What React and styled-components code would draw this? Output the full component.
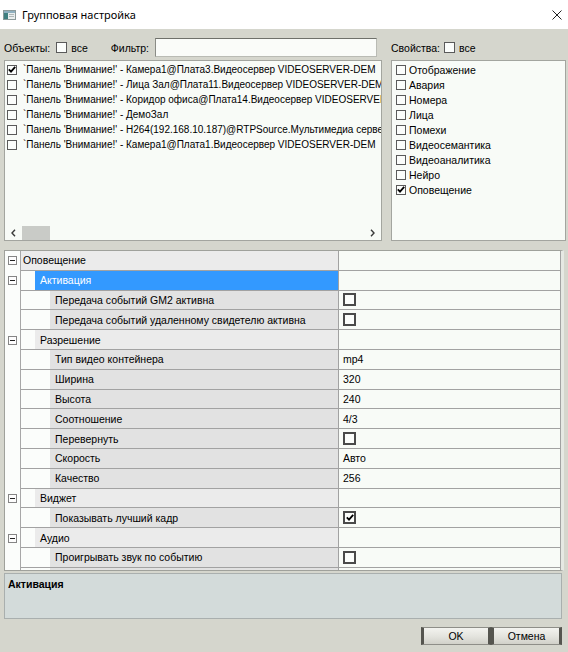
import React from 'react';
import styled, { createGlobalStyle } from 'styled-components';

const GlobalStyle = createGlobalStyle`
  html, body { margin: 0; padding: 0; background: #d5d6cd; }
  body { font-family: "Liberation Sans", Arial, sans-serif; font-size: 10.5px; color: #000; }
  * { box-sizing: border-box; }
`;

const Window = styled.div`
  width: 568px;
  height: 652px;
  display: flex;
  flex-direction: column;
  background: #d5d6cd;
  overflow: hidden;
`;

const TitleBar = styled.div`
  height: 29px;
  flex: none;
  background: #ffffff;
  display: flex;
  align-items: center;
  padding: 0 6px 0 3px;
`;

const Title = styled.span`
  flex: 1;
  margin-left: 6px;
  font-family: "Noto Sans", "Liberation Sans", sans-serif;
  font-size: 11px;
  color: #000;
`;

const CloseIcon = styled.svg`
  width: 10px;
  height: 10px;
  display: block;
`;

const Body = styled.div`
  flex: 1;
  display: flex;
  flex-direction: column;
  padding: 0 2px 0 4px;
`;

const TopArea = styled.div`
  display: grid;
  grid-template-columns: 378px 1fr;
  column-gap: 9px;
`;

const Column = styled.div`
  display: flex;
  flex-direction: column;
`;

const FilterRow = styled.div`
  height: 31px;
  padding-top: 6px;
  display: flex;
  align-items: center;
  white-space: nowrap;
`;

const Label = styled.span`
  margin-left: ${p => p.$gap || 0}px;
`;

const Spacer = styled.div`
  flex: 1;
`;

const FilterInput = styled.div`
  width: 222px;
  height: 19px;
  margin-left: 6px;
  margin-right: 5px;
  background: #fafcf9;
  border: 1px solid #b9bbb4;
  border-top-color: #6f716b;
  border-left-color: #8a8c86;
`;

const Box = styled.span`
  flex: none;
  width: ${p => p.$size || 10}px;
  height: ${p => p.$size || 10}px;
  margin-left: ${p => p.$ml || 0}px;
  border: ${p => p.$thick ? 2 : 1}px solid ${p => p.$thick ? '#4a4a4a' : '#5a5a5a'};
  background: #fbfdfb;
  display: flex;
  align-items: center;
  justify-content: center;
`;

const CheckMark = () => (
  <svg width="8" height="7" viewBox="0 0 8 7">
    <path d="M0.8 3.4 L3 5.6 L7.2 0.8" fill="none" stroke="#000" strokeWidth="1.8" />
  </svg>
);

const CheckBox = ({ checked, size, ml, thick }) => (
  <Box $size={size} $ml={ml} $thick={thick}>{checked && <CheckMark />}</Box>
);

const ListBox = styled.div`
  height: 181px;
  border: 1px solid #a3a59f;
  background: #f8fbf7;
  display: flex;
  flex-direction: column;
  overflow: hidden;
  font-size: ${p => p.$fs || 10.5}px;
`;

const ListItems = styled.div`
  flex: 1;
  padding-top: 1px;
  display: flex;
  flex-direction: column;
  overflow: hidden;
`;

const ListItem = styled.div`
  height: 15px;
  flex: none;
  display: flex;
  align-items: center;
  padding-left: ${p => p.$pad}px;
  white-space: nowrap;
`;

const ItemText = styled.span`
  margin-left: ${p => p.$gap}px;
`;

const HScroll = styled.div`
  height: 15px;
  flex: none;
  display: flex;
  align-items: center;
`;

const ScrollArrow = styled.div`
  width: 17px;
  height: 15px;
  display: flex;
  align-items: center;
  justify-content: center;
`;

const ScrollThumb = styled.div`
  width: 28px;
  height: 14px;
  background: #c9cbc7;
`;

const Chevron = ({ dir }) => (
  <svg width="5" height="8" viewBox="0 0 5 8">
    <path d={dir === 'left' ? 'M4 0.8 L1 4 L4 7.2' : 'M1 0.8 L4 4 L1 7.2'} fill="none" stroke="#3a3a3a" strokeWidth="1.4" />
  </svg>
);

const Grid = styled.div`
  margin-top: 9px;
  margin-right: 2px;
  height: 321px;
  border: 1px solid #9fa19b;
  border-right: 3px solid #e6e8e3;
  background: #f8fbf7;
  display: flex;
  flex-direction: column;
  overflow: hidden;
`;

const Row = styled.div`
  flex: none;
  height: 19.8px;
  display: grid;
  grid-template-columns: 16px 317px 1fr;
`;

const Gutter = styled.div`
  background: #fbfdfb;
  border-right: 1px solid #a7a7a7;
  display: flex;
  align-items: center;
  justify-content: center;
  padding-right: 1px;
`;

const Minus = styled.span`
  width: 9px;
  height: 9px;
  border: 1px solid #858585;
  background: #fdfdfd;
  display: flex;
  align-items: center;
  justify-content: center;
  &::after {
    content: '';
    width: 5px;
    height: 1px;
    background: #222;
  }
`;

const LabelCell = styled.div`
  display: flex;
  padding-left: ${p => p.$indent}px;
  background: #fbfdfb;
  border-bottom: 1px solid #a2a2a2;
`;

const LabelText = styled.div`
  flex: 1;
  display: flex;
  align-items: center;
  padding-left: ${p => p.$pad}px;
  white-space: nowrap;
  overflow: hidden;
  background: ${p => p.$selected ? '#3399ff' : p.$category ? '#ebebeb' : '#e2e2e2'};
  color: ${p => p.$selected ? '#ffffff' : '#000000'};
`;

const ValueCell = styled.div`
  display: flex;
  align-items: center;
  padding-left: 4px;
  border-left: 1px solid #a2a2a2;
  border-bottom: 1px solid #a2a2a2;
  border-right: 1px solid #a2a2a2;
  background: #f8fbf7;
`;

const Description = styled.div`
  margin-top: 2px;
  margin-right: 4px;
  height: 46px;
  border: 1px solid #a9afae;
  background: #d3dbda;
  padding: 4px 3px;
  font-weight: bold;
  line-height: 13px;
`;

const ButtonRow = styled.div`
  margin-top: 8px;
  margin-right: 4px;
  display: flex;
  justify-content: flex-end;
`;

const Button = styled.div`
  width: ${p => p.$w}px;
  height: 18px;
  display: flex;
  align-items: center;
  justify-content: center;
  border: 1px solid #8e8e88;
  border-left: 3px solid #55554f;
  border-right: 3px solid #55554f;
  background: linear-gradient(#f3f3ef, #e3e3dd 55%, #d1d1c9);
  color: #000;
`;

const AppIcon = () => (
  <svg width="13" height="10" viewBox="0 0 13 10">
    <rect x="0.5" y="0.5" width="12" height="9" fill="#e9eeee" stroke="#8c9a9a" />
    <rect x="1" y="1" width="11" height="2" fill="#8fb0c0" />
    <rect x="1" y="3" width="4" height="6" fill="#3f7f80" />
    <rect x="6" y="4" width="5" height="1" fill="#b0b8b8" />
    <rect x="6" y="6" width="5" height="1" fill="#b0b8b8" />
  </svg>
);

const objects = [
  { text: "`Панель 'Внимание!' - Камера1@Плата3.Видеосервер VIDEOSERVER-DEM", checked: true },
  { text: "`Панель 'Внимание!' - Лица Зал@Плата11.Видеосервер VIDEOSERVER-DEM" },
  { text: "`Панель 'Внимание!' - Коридор офиса@Плата14.Видеосервер VIDEOSERVER-DEM" },
  { text: "`Панель 'Внимание!' - ДемоЗал" },
  { text: "`Панель 'Внимание!' - H264(192.168.10.187)@RTPSource.Мультимедиа сервер VIDEOSERVER-DEM" },
  { text: "`Панель 'Внимание!' - Камера1@Плата1.Видеосервер VIDEOSERVER-DEM" },
];

const props = [
  'Отображение', 'Авария', 'Номера', 'Лица', 'Помехи',
  'Видеосемантика', 'Видеоаналитика', 'Нейро', 'Оповещение',
];

const rows = [
  { kind: 'cat0', label: 'Оповещение' },
  { kind: 'cat1', label: 'Активация', selected: true },
  { kind: 'item', label: 'Передача событий GM2 активна', check: false },
  { kind: 'item', label: 'Передача событий удаленному свидетелю активна', check: false },
  { kind: 'cat1', label: 'Разрешение' },
  { kind: 'item', label: 'Тип видео контейнера', value: 'mp4' },
  { kind: 'item', label: 'Ширина', value: '320' },
  { kind: 'item', label: 'Высота', value: '240' },
  { kind: 'item', label: 'Соотношение', value: '4/3' },
  { kind: 'item', label: 'Перевернуть', check: false },
  { kind: 'item', label: 'Скорость', value: 'Авто' },
  { kind: 'item', label: 'Качество', value: '256' },
  { kind: 'cat1', label: 'Виджет' },
  { kind: 'item', label: 'Показывать лучший кадр', check: true },
  { kind: 'cat1', label: 'Аудио' },
  { kind: 'item', label: 'Проигрывать звук по событию', check: false },
  { kind: 'empty', label: '' },
];

const indentFor = { cat0: 0, cat1: 14, item: 29, empty: 29 };
const padFor = { cat0: 2, cat1: 5, item: 5, empty: 5 };

export default function App() {
  return (
    <>
      <GlobalStyle />
      <Window>
        <TitleBar>
          <AppIcon />
          <Title>Групповая настройка</Title>
          <CloseIcon viewBox="0 0 10 10">
            <path d="M0.5 0.5 L9.5 9.5 M9.5 0.5 L0.5 9.5" stroke="#222" strokeWidth="1" />
          </CloseIcon>
        </TitleBar>
        <Body>
          <TopArea>
            <Column>
              <FilterRow>
                <Label>Объекты:</Label>
                <CheckBox ml={6} size={11} />
                <Label $gap={4}>все</Label>
                <Spacer />
                <Label>Фильтр:</Label>
                <FilterInput />
              </FilterRow>
              <ListBox $fs={10}>
                <ListItems>
                  {objects.map((o, i) => (
                    <ListItem key={i} $pad={2}>
                      <CheckBox checked={o.checked} />
                      <ItemText $gap={6}>{o.text}</ItemText>
                    </ListItem>
                  ))}
                </ListItems>
                <HScroll>
                  <ScrollArrow><Chevron dir="left" /></ScrollArrow>
                  <ScrollThumb />
                  <Spacer />
                  <ScrollArrow><Chevron dir="right" /></ScrollArrow>
                </HScroll>
              </ListBox>
            </Column>
            <Column>
              <FilterRow>
                <Label>Свойства:</Label>
                <CheckBox ml={4} size={11} />
                <Label $gap={4}>все</Label>
              </FilterRow>
              <ListBox>
                <ListItems>
                  {props.map((p, i) => (
                    <ListItem key={p} $pad={4}>
                      <CheckBox checked={i === props.length - 1} />
                      <ItemText $gap={3}>{p}</ItemText>
                    </ListItem>
                  ))}
                </ListItems>
              </ListBox>
            </Column>
          </TopArea>

          <Grid>
            {rows.map((r, i) => (
              <Row key={i}>
                <Gutter>{(r.kind === 'cat0' || r.kind === 'cat1') && <Minus />}</Gutter>
                <LabelCell $indent={indentFor[r.kind]}>
                  <LabelText
                    $pad={padFor[r.kind]}
                    $category={r.kind === 'cat0' || r.kind === 'cat1'}
                    $selected={r.selected}
                  >
                    {r.label}
                  </LabelText>
                </LabelCell>
                <ValueCell>
                  {r.value}
                  {r.check !== undefined && <CheckBox checked={r.check} size={13} thick />}
                </ValueCell>
              </Row>
            ))}
          </Grid>

          <Description>Активация</Description>

          <ButtonRow>
            <Button $w={70}>OK</Button>
            <Button $w={71}>Отмена</Button>
          </ButtonRow>
        </Body>
      </Window>
    </>
  );
}
